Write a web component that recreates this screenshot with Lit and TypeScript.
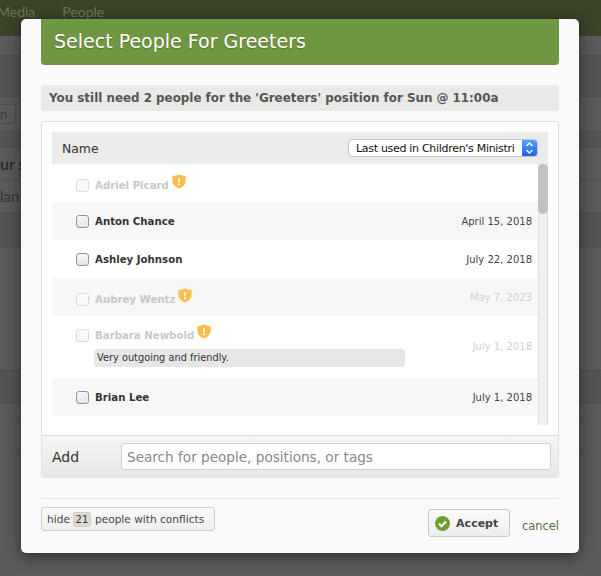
import { LitElement, html, css, svg } from "lit";
import { customElement } from "lit/decorators.js";

const shield = svg`<svg class="shield" viewBox="0 0 15 16" width="14" height="15"><path d="M7.5 0.3C9.5 1.5 11.8 2 14.6 2.1V7.5C14.6 11.2 11.5 14 7.5 15.6C3.5 14 0.4 11.2 0.4 7.5V2.1C3.2 2 5.5 1.5 7.5 0.3Z" fill="#fbbd4b"/><rect x="6.6" y="4.2" width="1.9" height="5" rx="0.8" fill="#fff"/><circle cx="7.5" cy="11" r="1.1" fill="#fff"/></svg>`;

type Row = { name: string; date: string; off?: boolean; note?: string; warn?: boolean };
const rows: Row[] = [
  { name: "Adriel Picard", date: "", off: true, warn: true },
  { name: "Anton Chance", date: "April 15, 2018" },
  { name: "Ashley Johnson", date: "July 22, 2018" },
  { name: "Aubrey Wentz", date: "May 7, 2023", off: true, warn: true },
  { name: "Barbara Newbold", date: "July 1, 2018", off: true, warn: true, note: "Very outgoing and friendly." },
  { name: "Brian Lee", date: "July 1, 2018" },
];

@customElement("app-root")
export class AppRoot extends LitElement {
  static styles = css`
    :host { display: block; position: relative; width: 601px; height: 576px; overflow: hidden; background: #5a5a5a; font-family: "DejaVu Sans", sans-serif; color: #333; }
    * { box-sizing: border-box; }
    .nav { height: 36px; background: #3a4429; color: #6e7660; font: 14px "Lato", sans-serif; display: flex; gap: 27px; padding: 3px 0 0 0; }
    .nav span:first-child { margin-left: -3px; }
    .bg { height: 540px; display: flex; flex-direction: column; font-family: "Lato", sans-serif; color: #3a3a3a; }
    .band { flex: none; border-bottom: 1px solid #4d4d4d; display: flex; align-items: center; font-size: 14px; }
    .band.dark { background: #545454; }
    .band.faint { border-bottom-color: #555; }
    .b1 { height: 20px; }
    .b2 { height: 41px; }
    .b3 { height: 35px; }
    .b4 { height: 16px; }
    .b5 { height: 32px; font-weight: 700; font-size: 16px; color: #2f2f2f; }
    .b6 { height: 33px; color: #333; font-size: 15px; }
    .b7 { height: 34px; }
    .b8 { height: 124px; }
    .b9 { height: 33px; }
    .b10 { height: 16px; }
    .b11 { height: 32px; }
    .ghost { width: 16px; height: 20px; border: 1px solid #4c4c4c; border-left: 0; border-radius: 0 3px 3px 0; line-height: 18px; color: #3c3c3c; font-size: 13px; }
    .scrim { position: absolute; left: 21px; top: 19px; width: 558px; height: 534px; background: #fafafa; border-radius: 5px; box-shadow: 0 3px 14px rgba(0,0,0,.55); padding: 0 20px; display: flex; flex-direction: column; }
    .title { height: 46px; background: #6f9640; color: #fff; border-radius: 0 0 4px 4px; font-size: 19px; padding: 9px 13px 0; line-height: 26px; flex: none; text-shadow: 0 1px 1px rgba(0,0,0,.25); }
    .notice { margin-top: 20px; height: 26px; flex: none; background: #e9e9e8; border-radius: 3px; font-size: 11.9px; font-weight: 700; line-height: 26px; padding-left: 8px; color: #555; white-space: nowrap; }
    .box { margin-top: 10px; height: 357px; flex: none; border: 1px solid #e3e3e1; border-radius: 3px; background: #fff; display: flex; flex-direction: column; }
    .list { flex: none; height: 313px; padding: 10px 10px 0; }
    .head { height: 32px; background: #ebebeb; display: flex; align-items: center; justify-content: space-between; padding: 0 10px; font-size: 12.4px; color: #333; }
    .sel { width: 190px; height: 18px; border: 1px solid #c4c4c4; border-radius: 4px; background: #fff; display: flex; font: 11px "DejaVu Sans", sans-serif; letter-spacing: -0.3px; color: #111; overflow: hidden; line-height: 17px; }
    .selv { flex: 1; margin: 0 8px 0 7px; white-space: nowrap; min-width: 0; }
    .sel i { width: 15px; background: linear-gradient(#5aa2fb, #1366ee); flex: none; display: flex; align-items: center; justify-content: center; }
    .scrollwrap { display: flex; height: 261px; overflow: hidden; }
    .rows { flex: 1; min-width: 0; }
    .row { display: flex; justify-content: space-between; padding: 0 6px 0 24px; height: 38px; align-items: center; background: #fff; }
    .row:nth-child(even) { background: #f7f7f7; }
    .row.off .left { margin-top: 4px; }
    .row.tall { height: 62px; align-items: flex-start; padding-top: 9px; }
    .row.off { color: #c8c8c8; }
    .who { display: flex; align-items: center; font-size: 10.2px; font-weight: 700; gap: 6px; color: #333; }
    .off .who { color: #c8c8c8; }
    .who .shield { margin: -8px 0 0 -3px; flex: none; }
    .cb { width: 13px; height: 13px; border: 1px solid #959595; border-radius: 3px; background: linear-gradient(#f8f8f8, #e4e4e4); flex: none; }
    .off .cb { border-color: #dadada; background: #f9f9f9; }
    .note { margin: 7px 0 0 18px; width: 311px; height: 18px; background: #e7e7e7; border-radius: 3px; color: #333; font-size: 9.8px; font-weight: 400; line-height: 18px; padding-left: 3px; }
    .date { font-size: 10px; color: #444; }
    .off .date { color: #d0d0d0; }
    .tall .date { margin-top: 16px; }
    .track { width: 10px; flex: none; background: #f0f0ee; border-left: 1px solid #e0e0de; border-right: 1px solid #e0e0de; position: relative; }
    .thumb { position: absolute; left: -1px; right: -1px; top: 0; height: 50px; background: #c1c1c1; border-radius: 5px; }
    .add { height: 43px; border-top: 1px solid #dededc; background: linear-gradient(#f6f6f4, #e6e6e6); border-radius: 0 0 3px 3px; display: flex; align-items: center; padding: 0 7px 0 10px; font-size: 14px; color: #333; }
    .add label { width: 69px; flex: none; }
    .input { flex: 1; height: 27px; background: #fff; border: 1px solid #c9d2dc; border-radius: 3px; padding-left: 5px; color: #888; font-size: 13.6px; line-height: 26px; white-space: nowrap; overflow: hidden; }
    .foot { margin-top: 20px; border-top: 1px solid #e4e4e4; padding-top: 8px; display: flex; align-items: flex-start; }
    .hide { width: 174px; height: 24px; border: 1px solid #cfcfcf; border-radius: 3px; background: linear-gradient(#fafafa, #efefef); font-size: 10.6px; color: #444; padding: 0 0 0 5px; display: flex; align-items: center; gap: 3px; white-space: nowrap; }
    .hide b { font-weight: 400; background: #dcdad2; border: 1px solid #cfccc0; border-radius: 3px; width: 18px; height: 15px; line-height: 13px; font-size: 10px; text-align: center; color: #333; margin-right: 1px; }
    .spacer { flex: 1; }
    .accept { margin-top: 2px; width: 82px; height: 28px; border: 1px solid #c8c8c8; border-radius: 3px; background: linear-gradient(#fbfbfb, #ededed); display: flex; align-items: center; gap: 6px; padding-left: 6px; font-size: 11px; font-weight: 700; color: #444; }
    .cancel { margin: 12px 0 0 12px; font-size: 11.4px; color: #566b3f; }
  `;

  render() {
    return html`
      <div class="nav"><span>Media</span><span>People</span></div>
      <div class="bg">
        <div class="band b1"></div>
        <div class="band b2 dark"></div>
        <div class="band b3"><div class="ghost">n</div></div>
        <div class="band b4 dark"></div>
        <div class="band b5">ur s</div>
        <div class="band b6">lan</div>
        <div class="band b7 dark"></div>
        <div class="band b8"></div>
        <div class="band b9 dark"></div>
        <div class="band b10 faint"></div>
        <div class="band b11 faint"></div>
      </div>
      <div class="scrim">
        <div class="title">Select People For Greeters</div>
        <div class="notice">You still need 2 people for the 'Greeters' position for Sun @ 11:00a</div>
        <div class="box">
          <div class="list">
            <div class="head"><span>Name</span>
              <div class="sel"><div class="selv">Last used in Children's Ministri</div><i><svg width="9" height="14" viewBox="0 0 9 14"><path d="M1.5 5L4.5 2L7.5 5M1.5 9L4.5 12L7.5 9" fill="none" stroke="#fff" stroke-width="1.4"/></svg></i></div>
            </div>
            <div class="scrollwrap">
              <div class="rows">
                ${rows.map(r => html`
                  <div class="row ${r.off ? "off" : ""} ${r.note ? "tall" : ""}">
                    <div class="left">
                      <div class="who"><span class="cb"></span><span>${r.name}</span>${r.warn ? shield : ""}</div>
                      ${r.note ? html`<div class="note">${r.note}</div>` : ""}
                    </div>
                    <div class="date">${r.date}</div>
                  </div>`)}
              </div>
              <div class="track"><div class="thumb"></div></div>
            </div>
          </div>
          <div class="add"><label>Add</label><div class="input">Search for people, positions, or tags</div></div>
        </div>
        <div class="foot">
          <div class="hide">hide <b>21</b> people with conflicts</div>
          <div class="spacer"></div>
          <div class="accept"><svg width="15" height="15" viewBox="0 0 15 15"><circle cx="7.5" cy="7.5" r="7.5" fill="#6f9f32"/><path d="M4 7.8L6.5 10.2L11 5.4" fill="none" stroke="#fff" stroke-width="2.2"/></svg>Accept</div>
          <div class="cancel">cancel</div>
        </div>
      </div>
    `;
  }
}
